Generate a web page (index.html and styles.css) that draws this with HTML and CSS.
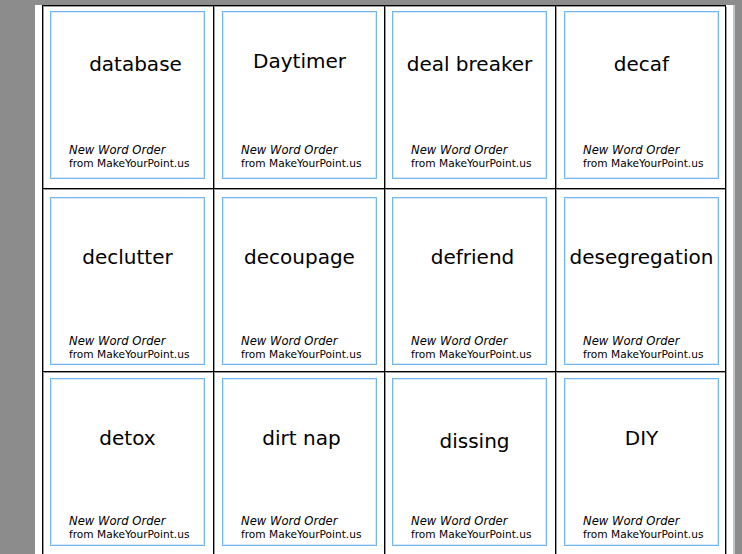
FILE: index.html
```html
<!DOCTYPE html>
<html>
<head>
<meta charset="utf-8">
<link rel="stylesheet" href="styles.css">
</head>
<body>
<div class="page">
  <div class="sheet">
    <div class="cell r1"><div class="card" style="--dx:8px"><div class="word">database</div><div class="foot"><i>New Word Order</i><span>from MakeYourPoint.us</span></div></div></div>
    <div class="cell r1"><div class="card" style="--dy:-3px"><div class="word">Daytimer</div><div class="foot"><i>New Word Order</i><span>from MakeYourPoint.us</span></div></div></div>
    <div class="cell r1"><div class="card"><div class="word">deal breaker</div><div class="foot"><i>New Word Order</i><span>from MakeYourPoint.us</span></div></div></div>
    <div class="cell r1"><div class="card"><div class="word">decaf</div><div class="foot"><i>New Word Order</i><span>from MakeYourPoint.us</span></div></div></div>

    <div class="cell r2"><div class="card"><div class="word">declutter</div><div class="foot"><i>New Word Order</i><span>from MakeYourPoint.us</span></div></div></div>
    <div class="cell r2"><div class="card"><div class="word">decoupage</div><div class="foot"><i>New Word Order</i><span>from MakeYourPoint.us</span></div></div></div>
    <div class="cell r2"><div class="card" style="--dx:3px"><div class="word">defriend</div><div class="foot"><i>New Word Order</i><span>from MakeYourPoint.us</span></div></div></div>
    <div class="cell r2"><div class="card"><div class="word">desegregation</div><div class="foot"><i>New Word Order</i><span>from MakeYourPoint.us</span></div></div></div>

    <div class="cell r3"><div class="card"><div class="word">detox</div><div class="foot"><i>New Word Order</i><span>from MakeYourPoint.us</span></div></div></div>
    <div class="cell r3"><div class="card" style="--dx:2px"><div class="word">dirt nap</div><div class="foot"><i>New Word Order</i><span>from MakeYourPoint.us</span></div></div></div>
    <div class="cell r3"><div class="card" style="--dx:5px;--dy:3px"><div class="word">dissing</div><div class="foot"><i>New Word Order</i><span>from MakeYourPoint.us</span></div></div></div>
    <div class="cell r3"><div class="card"><div class="word">DIY</div><div class="foot"><i>New Word Order</i><span>from MakeYourPoint.us</span></div></div></div>
  </div>
</div>
</body>
</html>
```
FILE: styles.css
```css
html, body {
  margin: 0;
  padding: 0;
  height: 100%;
  overflow: hidden;
}
body {
  background: #8c8c8c;
  font-family: "DejaVu Sans", Verdana, sans-serif;
  color: #000;
}
.page {
  margin: 2px 0 0 35px;
  width: 698px;
  height: 700px;
  background: #fff;
  border-right: 2px solid #c4c4c4;
}
.sheet {
  display: grid;
  grid-template-columns: 171px 171px 171px 170px;
  grid-auto-rows: 183px;
  width: max-content;
  margin: 5px 0 0 7px;
  border-left: 1px solid #000;
  border-top: 1px solid #000;
  box-shadow: inset 1px 1px 0 #9a9a9a;
}
.cell {
  box-sizing: border-box;
  border-right: 1px solid #000;
  border-bottom: 1px solid #000;
  box-shadow: 1px 1px 0 #9a9a9a;
  padding-left: 7px;
}
.cell:nth-child(4n+2), .cell:nth-child(4n) {
  padding-left: 8px;
}
.cell.r1 { padding-top: 5px; }
.cell.r2 { padding-top: 8px; }
.cell.r3 { padding-top: 6px; }
.card {
  box-sizing: border-box;
  width: 155px;
  height: 168px;
  border: 1px solid #74b6f0;
  box-shadow: inset 0 0 0 1px #d6eafc;
  display: flex;
  flex-direction: column;
}
.word {
  font-size: 20px;
  line-height: 24px;
  text-align: center;
  white-space: nowrap;
  padding-top: 40px;
  transform: translate(var(--dx, 0px), var(--dy, 0px));
}
.r2 .word, .r3 .word { padding-top: 47px; }
.foot {
  margin-top: auto;
  padding: 0 0 8px 18px;
  display: flex;
  flex-direction: column;
}
.foot i {
  font-size: 11.6px;
  line-height: 13px;
}
.foot span {
  font-size: 10.6px;
  line-height: 13px;
}
.r2 .foot { padding-bottom: 3px; }
.r3 .foot { padding-bottom: 4px; }
```
